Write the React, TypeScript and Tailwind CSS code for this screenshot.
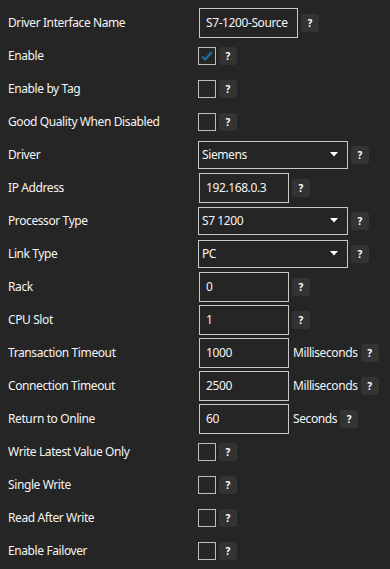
import type { ReactNode } from 'react';

type Field =
  | { kind: 'text'; label: string; value: string; width: string; unit?: string }
  | { kind: 'check'; label: string; checked?: boolean }
  | { kind: 'select'; label: string; value: string };

const FIELDS: Field[] = [
  { kind: 'text', label: 'Driver Interface Name', value: 'S7-1200-Source', width: 'w-[99px]' },
  { kind: 'check', label: 'Enable', checked: true },
  { kind: 'check', label: 'Enable by Tag' },
  { kind: 'check', label: 'Good Quality When Disabled' },
  { kind: 'select', label: 'Driver', value: 'Siemens' },
  { kind: 'text', label: 'IP Address', value: '192.168.0.3', width: 'w-[90px]' },
  { kind: 'select', label: 'Processor Type', value: 'S7 1200' },
  { kind: 'select', label: 'Link Type', value: 'PC' },
  { kind: 'text', label: 'Rack', value: '0', width: 'w-[90px]' },
  { kind: 'text', label: 'CPU Slot', value: '1', width: 'w-[90px]' },
  { kind: 'text', label: 'Transaction Timeout', value: '1000', width: 'w-[90px]', unit: 'Milliseconds' },
  { kind: 'text', label: 'Connection Timeout', value: '2500', width: 'w-[90px]', unit: 'Milliseconds' },
  { kind: 'text', label: 'Return to Online', value: '60', width: 'w-[90px]', unit: 'Seconds' },
  { kind: 'check', label: 'Write Latest Value Only' },
  { kind: 'check', label: 'Single Write' },
  { kind: 'check', label: 'Read After Write' },
  { kind: 'check', label: 'Enable Failover' },
];

function Help() {
  return (
    <span className="ml-[3px] flex h-[18px] w-[18px] shrink-0 items-center justify-center rounded-[3px] bg-[#333333] text-[10px] font-bold leading-none tracking-normal text-white">
      ?
    </span>
  );
}

function Control({ field }: { field: Field }): ReactNode {
  if (field.kind === 'check') {
    return (
      <>
        <span className="flex h-[18px] w-[18px] items-center justify-center border border-[#bdbdbd]">
          {field.checked && (
            <svg viewBox="0 0 16 16" className="h-[14px] w-[14px]" aria-hidden="true">
              <path d="M2.5 8.5 L6 12 L13.5 3.5" fill="none" stroke="#1d6fa8" strokeWidth="2.4" />
            </svg>
          )}
        </span>
        <Help />
      </>
    );
  }
  if (field.kind === 'select') {
    return (
      <>
        <div className="flex h-[28px] w-[150px] items-center justify-between border border-[#c8c8c8] pl-[3px] pr-[9px]">
          <span>{field.value}</span>
          <svg viewBox="0 0 8 5" className="h-[5px] w-[8px]" aria-hidden="true">
            <path d="M0 0 H8 L4 4.5 Z" fill="#ffffff" />
          </svg>
        </div>
        <Help />
      </>
    );
  }
  return (
    <>
      <div
        className={`ml-px flex h-[30px] items-center overflow-hidden whitespace-nowrap border border-[#c8c8c8] px-[6px] ${field.width}`}
      >
        {field.value}
      </div>
      {field.unit && <span className="ml-[4px] whitespace-nowrap">{field.unit}</span>}
      <Help />
    </>
  );
}

export default function App() {
  return (
    <div
      className="min-h-[569px] w-[390px] bg-[#252525] pt-[6px] text-[12px] tracking-[-0.4px] text-[#f4f4f4]"
      style={{ fontFamily: '"Noto Sans", "Open Sans", sans-serif' }}
    >
      {FIELDS.map((f) => (
        <div key={f.label} className="flex h-[33px] items-center">
          <div className="w-[198px] shrink-0 whitespace-nowrap pl-[8px]">{f.label}</div>
          <Control field={f} />
        </div>
      ))}
    </div>
  );
}
